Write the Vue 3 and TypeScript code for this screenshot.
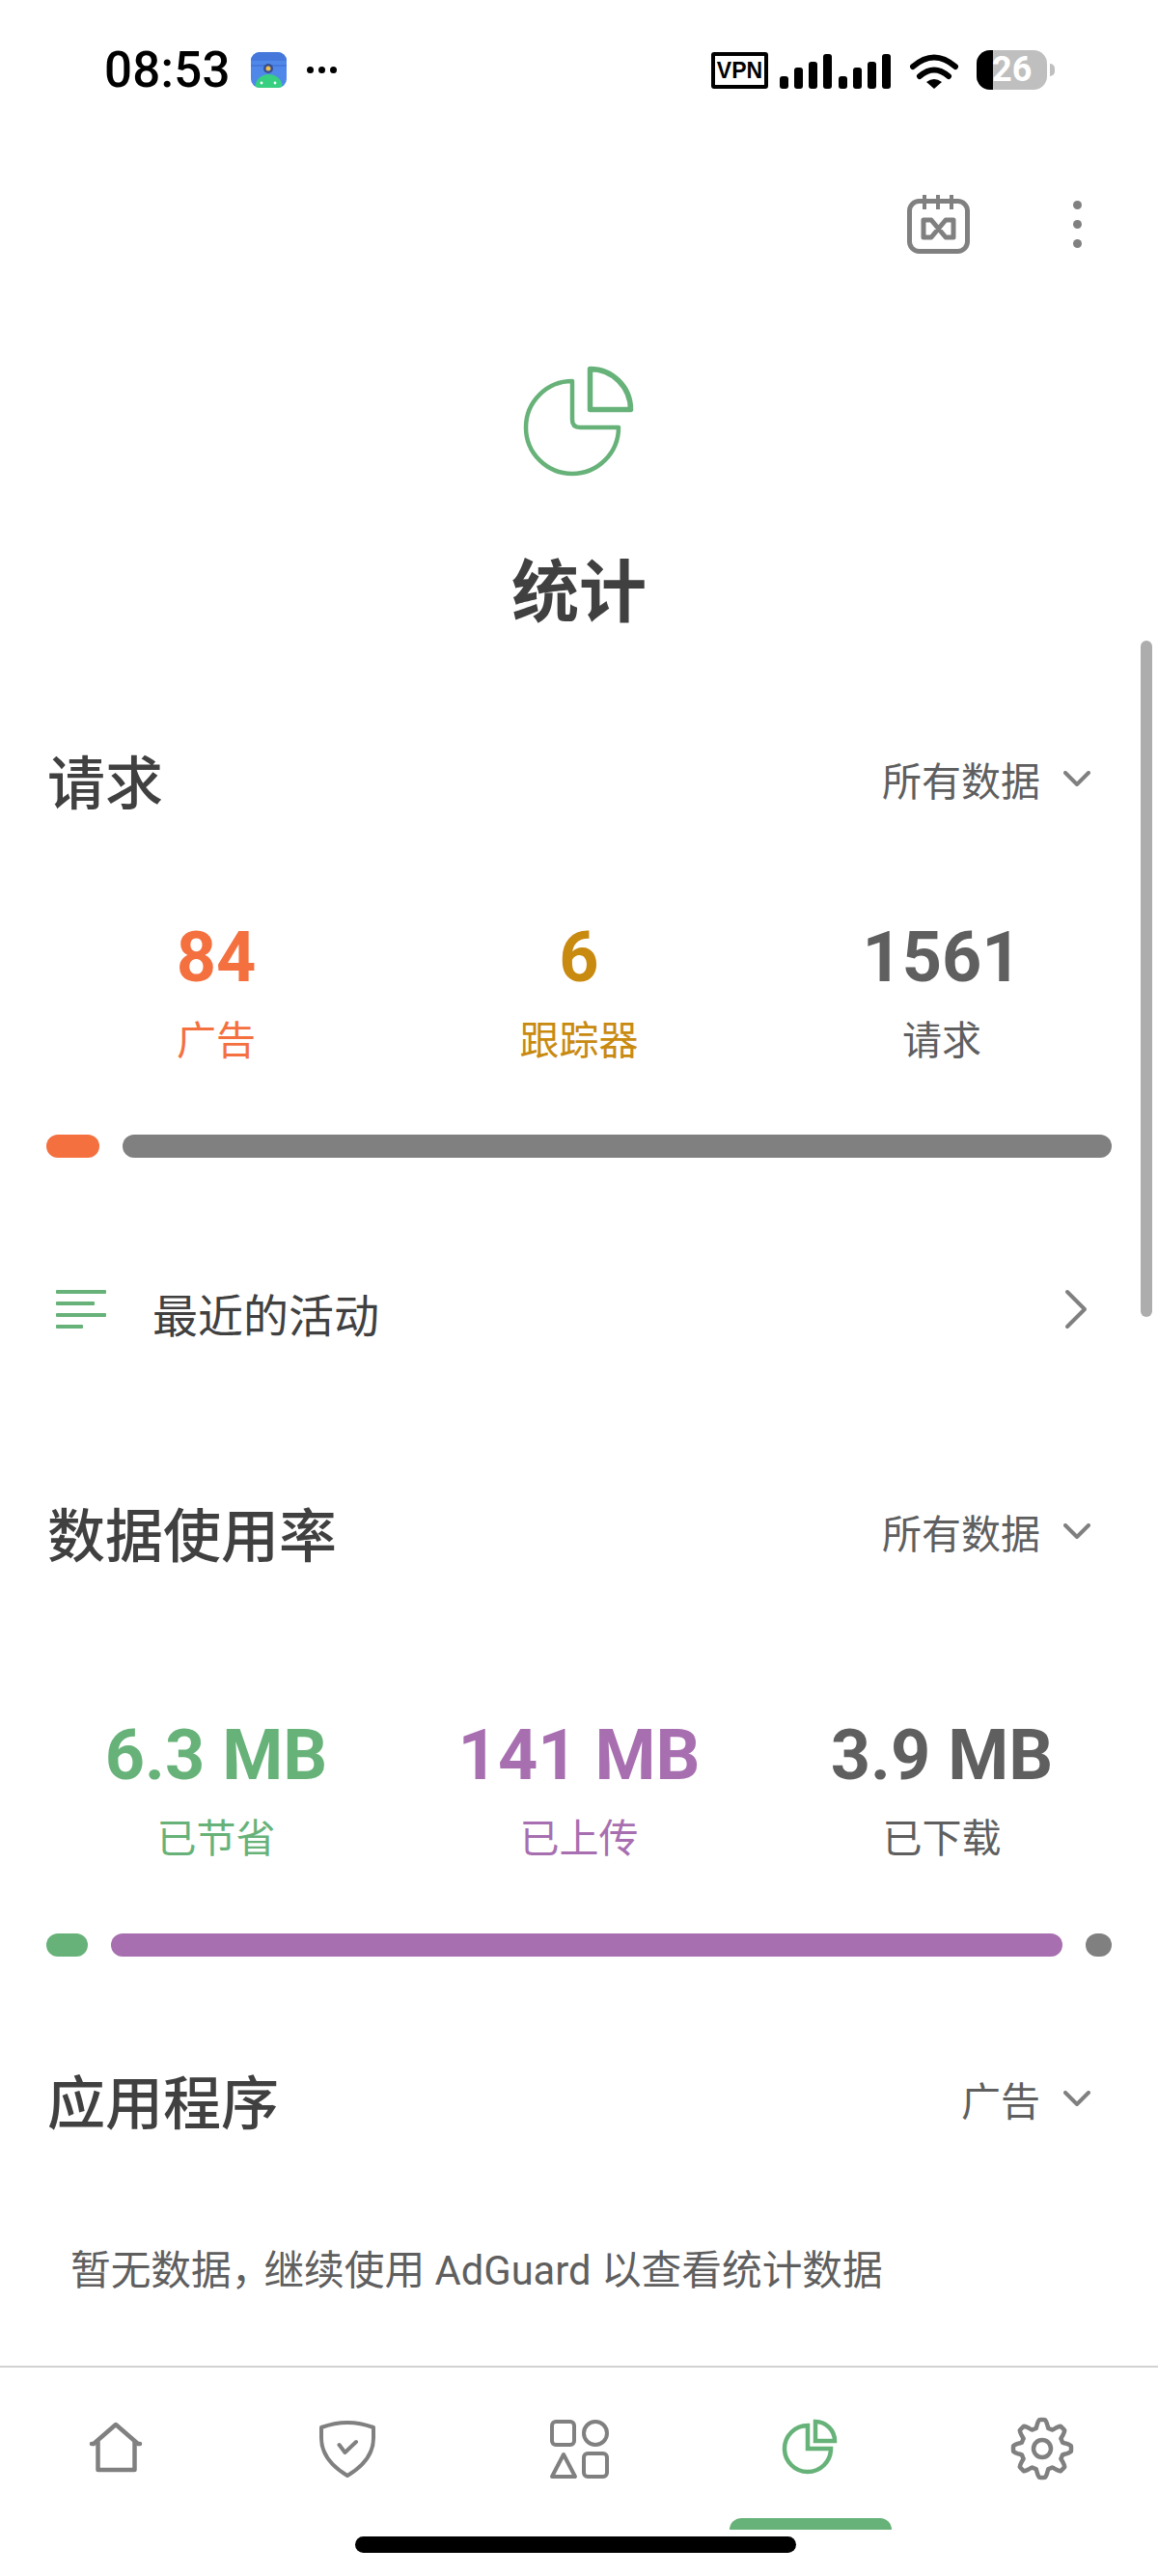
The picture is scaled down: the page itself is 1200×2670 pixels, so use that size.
<script setup lang="ts">
// 统计页面的数据
const requestStats = [
  { value: "84", label: "广告", color: "#f4703f" },
  { value: "6", label: "跟踪器", color: "#c98a10" },
  { value: "1561", label: "请求", color: "#5f5f5f" },
];

const usageStats = [
  { value: "6.3 MB", label: "已节省", color: "#67b279" },
  { value: "141 MB", label: "已上传", color: "#a86fb0" },
  { value: "3.9 MB", label: "已下载", color: "#5f5f5f" },
];

const requestBar = [
  { width: 55, color: "#f4703f" },
  { width: 1025, color: "#808080" },
];

const usageBar = [
  { width: 43, color: "#67b279" },
  { width: 986, color: "#a86fb0" },
  { width: 27, color: "#808080" },
];

const signalBars = [
  { h: 13, gap: 6 },
  { h: 22, gap: 6 },
  { h: 28, gap: 6 },
  { h: 36, gap: 7 },
  { h: 13, gap: 6 },
  { h: 22, gap: 6 },
  { h: 28, gap: 6 },
  { h: 36, gap: 0 },
];

// 齿轮的轮廓，按角度采样
const gearPath = (() => {
  const pts: string[] = [];
  for (let i = 0; i < 128; i++) {
    const a = (i / 128) * Math.PI * 2;
    const wave = Math.max(-1, Math.min(1, Math.cos(8 * a) * 1.5));
    const r = 26 + wave * 4;
    const x = 33 + r * Math.sin(a);
    const y = 33 - r * Math.cos(a);
    pts.push(`${x.toFixed(2)} ${y.toFixed(2)}`);
  }
  return "M" + pts.join("L") + "Z";
})();
</script>

<template>
  <div class="page">
    <div class="status-bar">
      <span class="time">08:53</span>
      <svg class="app-icon" width="37" height="37" viewBox="0 0 37 37">
        <defs>
          <clipPath id="appClip"><rect width="37" height="37" rx="9" /></clipPath>
        </defs>
        <g clip-path="url(#appClip)">
          <rect width="37" height="37" fill="#5088ea" />
          <rect width="37" height="9" fill="#4678dc" />
          <rect y="13" width="37" height="2" fill="#4678dc" />
          <ellipse cx="18.5" cy="36" rx="14" ry="13" fill="#37cf80" />
          <circle cx="18" cy="17" r="5" fill="#39508f" />
          <circle cx="18" cy="17" r="2.5" fill="#f0c04a" />
          <circle cx="11" cy="32" r="1.4" fill="#fff" />
          <circle cx="25" cy="32" r="1.4" fill="#fff" />
        </g>
      </svg>
      <div class="more-dots"><i></i><i></i><i></i></div>

      <div class="status-right">
        <div class="vpn">VPN</div>
        <div class="signal">
          <i
            v-for="(b, i) in signalBars"
            :key="i"
            :style="{ height: b.h + 'px', marginRight: b.gap + 'px' }"
          ></i>
        </div>
        <svg class="wifi" width="50" height="37" viewBox="0 0 50 37">
          <path d="M3 14Q25 -5 47 14" fill="none" stroke="#000" stroke-width="6" stroke-linecap="round" />
          <path d="M10 24Q25 11 40 24" fill="none" stroke="#000" stroke-width="6" stroke-linecap="round" />
          <path d="M25 37L17 30Q25 24 33 30Z" fill="#000" />
        </svg>
        <div class="battery">
          <div class="battery-body">
            <div class="battery-level"></div>
            <span class="battery-text">26</span>
          </div>
          <div class="battery-nub"></div>
        </div>
      </div>
    </div>

    <div class="toolbar">
      <svg width="65" height="62" viewBox="0 0 65 62" fill="none" stroke="#808080">
        <rect x="2.5" y="7.5" width="60" height="52" rx="10" stroke-width="5" />
        <path d="M18 1V16M32 1V16M46 1V16" stroke-width="4" />
        <path d="M17 27H25L40 45H48V27H40L25 45H17Z" stroke-width="5" stroke-linejoin="round" />
      </svg>
      <div class="kebab"><i></i><i></i><i></i></div>
    </div>

    <div class="hero">
      <svg width="116" height="118" viewBox="0 0 116 118" fill="none" stroke="#67b279" stroke-linejoin="round">
        <path d="M51 17A48 48 0 1 0 99 65H59Q51 65 51 57Z" stroke-width="4.5" />
        <path d="M69.5 4.5A42 42 0 0 1 111.5 46.5H69.5Z" stroke-width="5.5" />
      </svg>
      <h1 class="title">统计</h1>
    </div>

    <main class="content">
      <div class="section-head first">
        <h2>请求</h2>
        <div class="filter">
          <span>所有数据</span>
          <svg width="28" height="16" viewBox="0 0 28 16" fill="none" stroke="#808080" stroke-width="4" stroke-linecap="round" stroke-linejoin="round">
            <path d="M2 2L14 14L26 2" />
          </svg>
        </div>
      </div>

      <div class="stats request-stats">
        <div v-for="s in requestStats" :key="s.label" class="stat" :style="{ color: s.color }">
          <div class="stat-value">{{ s.value }}</div>
          <div class="stat-label">{{ s.label }}</div>
        </div>
      </div>

      <div class="bar request-bar">
        <div
          v-for="(seg, i) in requestBar"
          :key="i"
          class="bar-seg"
          :style="{ width: seg.width + 'px', background: seg.color }"
        ></div>
      </div>

      <div class="activity">
        <div class="lines"><i class="l1"></i><i class="l2"></i><i class="l1"></i><i class="l3"></i></div>
        <span class="activity-text">最近的活动</span>
        <svg width="24" height="42" viewBox="0 0 24 42" fill="none" stroke="#808080" stroke-width="4" stroke-linecap="round" stroke-linejoin="round">
          <path d="M3 3L21 21L3 39" />
        </svg>
      </div>

      <div class="section-head second">
        <h2>数据使用率</h2>
        <div class="filter">
          <span>所有数据</span>
          <svg width="28" height="16" viewBox="0 0 28 16" fill="none" stroke="#808080" stroke-width="4" stroke-linecap="round" stroke-linejoin="round">
            <path d="M2 2L14 14L26 2" />
          </svg>
        </div>
      </div>

      <div class="stats usage-stats">
        <div v-for="s in usageStats" :key="s.label" class="stat" :style="{ color: s.color }">
          <div class="stat-value">{{ s.value }}</div>
          <div class="stat-label">{{ s.label }}</div>
        </div>
      </div>

      <div class="bar usage-bar">
        <div
          v-for="(seg, i) in usageBar"
          :key="i"
          class="bar-seg"
          :style="{ width: seg.width + 'px', background: seg.color }"
        ></div>
      </div>

      <div class="section-head third">
        <h2>应用程序</h2>
        <div class="filter">
          <span>广告</span>
          <svg width="28" height="16" viewBox="0 0 28 16" fill="none" stroke="#808080" stroke-width="4" stroke-linecap="round" stroke-linejoin="round">
            <path d="M2 2L14 14L26 2" />
          </svg>
        </div>
      </div>

      <p class="empty">暂无数据<span class="comma">，</span>继续使用 AdGuard 以查看统计数据</p>
    </main>

    <div class="scrollbar"></div>

    <nav class="nav">
      <div class="tabs">
        <div class="tab">
          <svg width="60" height="60" viewBox="0 0 60 60" fill="none" stroke="#808080" stroke-width="4.5" stroke-linejoin="round" stroke-linecap="round">
            <path d="M5 25H7L30 5L53 25H55" />
            <path d="M11.5 23V52H49.5V23" />
          </svg>
        </div>
        <div class="tab">
          <svg width="60" height="62" viewBox="0 0 60 62" fill="none" stroke="#808080" stroke-width="4" stroke-linejoin="round" stroke-linecap="round">
            <path d="M3 9Q30 -1 57 9V20C57 38 45 50 30 59C15 50 3 38 3 20Z" />
            <path d="M21.5 27L27.5 35L39 24" />
          </svg>
        </div>
        <div class="tab">
          <svg width="62" height="62" viewBox="0 0 62 62" fill="none" stroke="#808080" stroke-width="4" stroke-linejoin="round">
            <rect x="3" y="3" width="23" height="24" rx="4" />
            <circle cx="48" cy="15" r="12" />
            <path d="M15 37L27 60H3Z" />
            <rect x="36" y="36" width="24" height="24" rx="4" />
          </svg>
        </div>
        <div class="tab active">
          <svg width="60" height="62" viewBox="0 0 60 62" fill="none" stroke="#67b279" stroke-width="4.5">
            <path d="M27 7A24 24 0 1 0 51 31H27Z" />
            <path d="M35 3A20 20 0 0 1 55 23H35Z" />
          </svg>
          <div class="tab-indicator"></div>
        </div>
        <div class="tab">
          <svg width="66" height="66" viewBox="0 0 66 66" fill="none" stroke="#808080" stroke-width="4.5" stroke-linejoin="round">
            <path :d="gearPath" />
            <circle cx="33" cy="33" r="9" />
          </svg>
        </div>
      </div>
      <div class="home-bar"></div>
    </nav>
  </div>
</template>

<style scoped>
.page {
  position: relative;
  display: flex;
  flex-direction: column;
  width: 1200px;
  height: 2670px;
  overflow: hidden;
  background: #fff;
  color: #404040;
  font-family: Roboto, "Noto Sans CJK SC", sans-serif;
}

/* 状态栏 */
.status-bar {
  display: flex;
  align-items: center;
  height: 144px;
  padding: 0 108px;
  color: #000;
}

.time {
  width: 129px;
  font-size: 51px;
  line-height: 1;
  font-weight: 500;
  letter-spacing: 0.3px;
  white-space: nowrap;
}

.app-icon {
  margin-left: 23px;
}

.more-dots {
  display: flex;
  gap: 5px;
  margin-left: 21px;
}

.more-dots i {
  width: 7px;
  height: 7px;
  border-radius: 50%;
  background: #000;
}

.status-right {
  display: flex;
  align-items: flex-end;
  margin-left: auto;
  height: 42px;
}

.vpn {
  box-sizing: border-box;
  width: 59px;
  height: 38px;
  margin-bottom: 1px;
  border: 4px solid #000;
  border-radius: 3px;
  font-family: "Liberation Sans", sans-serif;
  font-size: 23px;
  font-weight: 700;
  line-height: 30px;
  text-align: center;
}

.signal {
  display: flex;
  align-items: flex-end;
  margin-left: 12px;
  margin-bottom: 1px;
}

.signal i {
  width: 9px;
  border-radius: 3px;
  background: #000;
}

.wifi {
  margin-left: 20px;
  margin-bottom: 1px;
}

.battery {
  display: flex;
  align-items: center;
  margin-left: 19px;
  margin-right: -1px;
}

.battery-body {
  position: relative;
  width: 73px;
  height: 41px;
  border-radius: 14px;
  overflow: hidden;
  background: #bfbfbf;
}

.battery-level {
  width: 17px;
  height: 100%;
  background: #000;
}

.battery-text {
  position: absolute;
  left: 16px;
  top: 0;
  font-size: 36px;
  font-weight: 700;
  line-height: 41px;
  color: #fff;
}

.battery-nub {
  width: 5px;
  height: 13px;
  margin-left: 3px;
  border-radius: 0 5px 5px 0;
  background: #bfbfbf;
}

/* 顶部工具栏 */
.toolbar {
  display: flex;
  align-items: center;
  justify-content: flex-end;
  gap: 107px;
  height: 176px;
  padding-right: 79px;
}

.kebab {
  display: flex;
  flex-direction: column;
  gap: 11px;
}

.kebab i {
  width: 9px;
  height: 9px;
  border-radius: 50%;
  background: #808080;
}

.hero {
  display: flex;
  flex-direction: column;
  align-items: center;
  margin-top: 58px;
}

.title {
  margin: 79px 0 0;
  font-size: 70px;
  font-weight: 700;
  line-height: 80px;
  color: #404040;
}

.content {
  flex: 1;
  overflow: hidden;
}

.section-head {
  display: flex;
  align-items: center;
  justify-content: space-between;
  height: 80px;
  padding: 0 70px 0 49px;
}

.section-head h2 {
  margin: 0;
  font-size: 60px;
  font-weight: 500;
  line-height: 80px;
  color: #404040;
}

.first {
  margin-top: 119px;
}

.second {
  margin-top: 147px;
}

.third {
  margin-top: 114px;
}

.filter {
  display: flex;
  align-items: center;
  gap: 24px;
  margin-bottom: 14px;
  font-size: 41px;
  color: #5f5f5f;
}

.stats {
  display: grid;
  grid-template-columns: repeat(3, 1fr);
  padding: 0 36px;
  text-align: center;
}

.request-stats {
  margin-top: 99px;
}

.usage-stats {
  margin-top: 146px;
}

.stat-value {
  font-size: 72px;
  font-weight: 700;
  line-height: 80px;
}

.stat-label {
  margin-top: 16px;
  font-size: 41px;
  line-height: 60px;
}

.bar {
  display: flex;
  justify-content: space-between;
  margin: 0 48px;
}

.request-bar {
  margin-top: 67px;
}

.usage-bar {
  margin-top: 68px;
}

.bar-seg {
  height: 24px;
  border-radius: 12px;
}

.activity {
  display: flex;
  align-items: center;
  height: 100px;
  margin-top: 107px;
  padding: 0 73px 0 58px;
}

.lines {
  display: flex;
  flex-direction: column;
  gap: 8px;
  width: 52px;
}

.lines i {
  height: 4px;
  border-radius: 1px;
  background: #67b279;
}

.l1 {
  width: 52px;
}

.l2 {
  width: 40px;
}

.l3 {
  width: 28px;
}

.activity-text {
  flex: 1;
  margin-left: 48px;
  padding-top: 6px;
  font-size: 47px;
  color: #404040;
}

.empty {
  margin: 102px 0 0 73px;
  font-size: 41.7px;
  line-height: 60px;
  color: #5f5f5f;
}

.comma {
  letter-spacing: -8px;
}

/* 滚动条 */
.scrollbar {
  position: absolute;
  top: 664px;
  right: 6px;
  width: 12px;
  height: 701px;
  border-radius: 6px;
  background: #adadad;
}

/* 底部导航 */
.nav {
  height: 218px;
  border-top: 2px solid #d2d2d2;
  box-sizing: border-box;
}

.tabs {
  display: grid;
  grid-template-columns: repeat(5, 240px);
  height: 168px;
}

.tab {
  position: relative;
  display: flex;
  align-items: center;
  justify-content: center;
}

.tab-indicator {
  position: absolute;
  left: 36px;
  bottom: 0;
  width: 168px;
  height: 12px;
  border-radius: 12px 12px 0 0;
  background: #67b279;
}

.home-bar {
  width: 457px;
  height: 17px;
  margin: 7px 0 0 368px;
  border-radius: 9px;
  background: #000;
}
</style>

<style>
html,
body {
  margin: 0;
  background: #fff;
}
</style>
